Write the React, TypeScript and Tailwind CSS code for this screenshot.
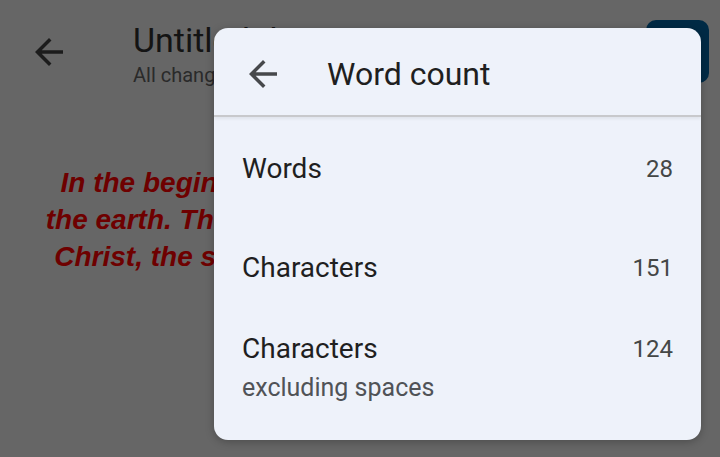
import React from "react";

const ArrowBack = ({ className }: { className?: string }) => (
  <svg viewBox="0 0 24 24" className={className} fill="currentColor">
    <path d="M20 11H7.83l5.59-5.59L12 4l-8 8 8 8 1.41-1.41L7.83 13H20v-2z" />
  </svg>
);

const rows = [
  { label: "Words", value: 28, pad: "pt-[34px] pb-[63px]" },
  { label: "Characters", value: 151, pad: "pb-[45px]" },
  { label: "Characters", value: 124, sub: "excluding spaces", pad: "" },
];

const WordCountDialog = () => {
  return (
    <div className="absolute left-[214px] top-[28px] w-[487px] h-[412px] rounded-[14px] bg-[#eef2fa] shadow-[0_2px_8px_rgba(0,0,0,0.25)] overflow-hidden font-['Roboto',sans-serif]">
      <div className="flex items-center h-[89px] pt-[5px] pl-[28px] border-b-2 border-[#c8c9cc] shadow-[0_2px_3px_rgba(0,0,0,0.06)]">
        <ArrowBack className="w-[42px] h-[42px] text-[#46484b]" />
        <h2 className="ml-[43px] text-[32px] text-[#1f1f1f]">Word count</h2>
      </div>
      <div className="px-[28px]">
        {rows.map((row, i) => (
          <div key={i} className={`flex justify-between items-start ${row.pad}`}>
            <div className="flex flex-col">
              <span className="text-[28px] leading-[36px] text-[#1f1f1f]">{row.label}</span>
              {row.sub && (
                <span className="mt-[3px] text-[25px] leading-[36px] text-[#505357]">{row.sub}</span>
              )}
            </div>
            <span className="text-[24px] leading-[36px] text-[#444746]">{row.value}</span>
          </div>
        ))}
      </div>
    </div>
  );
};

export default function App() {
  return (
    <div className="relative w-[720px] h-[457px] overflow-hidden bg-[#666666] font-['Roboto',sans-serif]">
      <div className="flex items-start pt-[20px] pl-[28px] pr-[11px]">
        <ArrowBack className="w-[42px] h-[42px] mt-[11px] text-[#1c1c1c]" />
        <div className="ml-[63px] flex-1">
          <div className="text-[34px] leading-[40px] text-[#141414]">Untitled document</div>
          <div className="mt-[2px] text-[20px] leading-[26px] text-[#2a2a2a]">All changes saved in Drive</div>
        </div>
        <div className="w-[63px] h-[63px] rounded-[10px] bg-[#002a45]" />
      </div>
      <div className="mt-[76px] text-center font-['Liberation_Sans',Arial,sans-serif] font-bold italic text-[28px] leading-[37px] text-[#6e0000]">
        <p>In the beginning God created the heaven and</p>
        <p>the earth. The beginning of the gospel of Jesus</p>
        <p>Christ, the son of God, as it is written in those</p>
      </div>
      <WordCountDialog />
    </div>
  );
}
